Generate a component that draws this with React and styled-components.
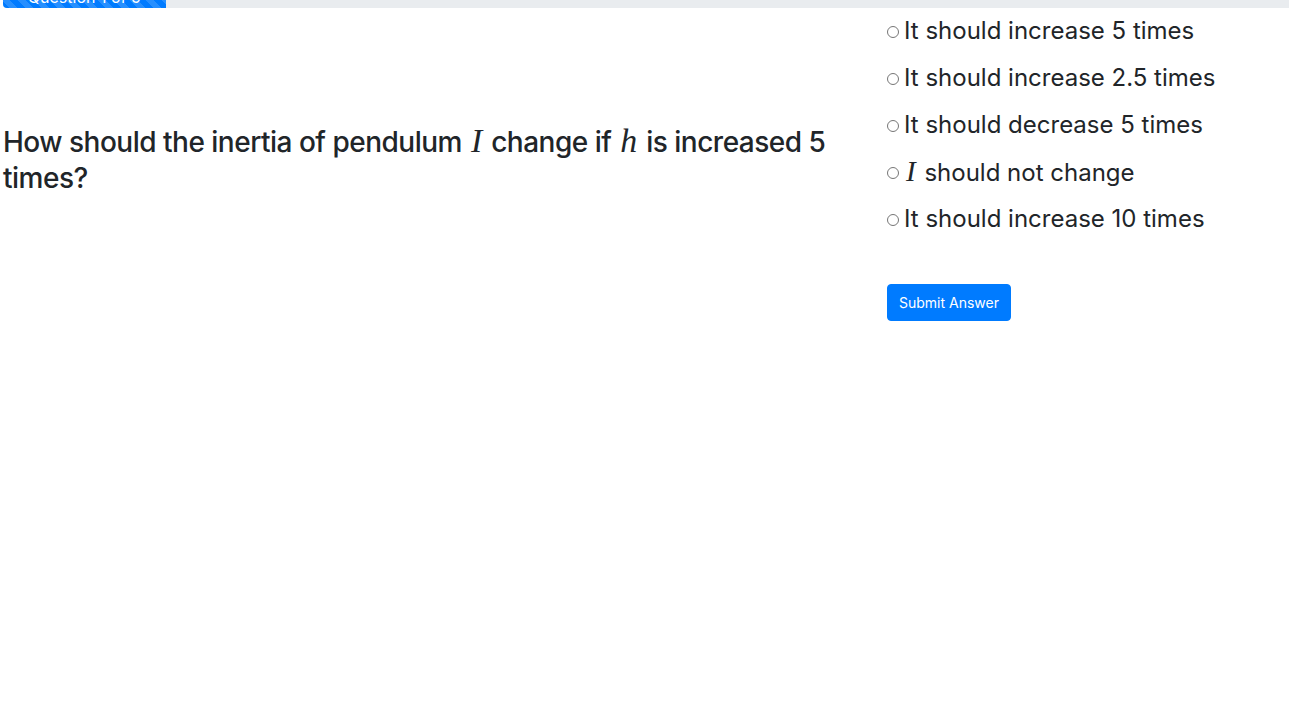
import React from 'react';
import styled, { createGlobalStyle } from 'styled-components';

const GlobalStyle = createGlobalStyle`
  html, body {
    margin: 0;
    padding: 0;
    background: #fff;
    color: #212529;
    font-family: Inter, "Noto Sans", "Liberation Sans", sans-serif;
    overflow: hidden;
  }
`;

const Page = styled.div`
  padding-left: 3px;
`;

const Progress = styled.div`
  display: flex;
  height: 22px;
  margin: -14px -4px 0 0;
  background: #e9ecef;
  border-radius: 4px;
  overflow: hidden;
`;

const ProgressFill = styled.div`
  width: ${(p) => p.$pct}%;
  background-color: #007bff;
  background-image: linear-gradient(
    45deg,
    rgba(255, 255, 255, 0.15) 25%,
    transparent 25%,
    transparent 50%,
    rgba(255, 255, 255, 0.15) 50%,
    rgba(255, 255, 255, 0.15) 75%,
    transparent 75%,
    transparent
  );
  background-size: 16px 16px;
  color: #fff;
  font-size: 16px;
  line-height: 22px;
  text-align: center;
  white-space: nowrap;
`;

const Row = styled.div`
  display: grid;
  grid-template-columns: 884px 1fr;
  align-items: center;
`;

const Question = styled.h3`
  margin: 0;
  max-width: 860px;
  font-size: 28px;
  font-weight: 500;
  line-height: 1.2;
  letter-spacing: -0.5px;
  padding-bottom: 12px;
`;

const Math = styled.span`
  font-family: "Liberation Serif", "DejaVu Serif", serif;
  font-style: italic;
  font-size: 1.21em;
  font-weight: 400;
  letter-spacing: 0;
  padding: 0 2px;
`;

const Answers = styled.form`
  padding-top: 6px;
  display: flex;
  flex-direction: column;
`;

const Option = styled.label`
  display: flex;
  align-items: center;
  height: 32px;
  margin-bottom: 15px;
  font-size: 24px;
  font-weight: 400;
  gap: 5px;
`;

const Radio = styled.input`
  appearance: none;
  margin: 4px 0 0 0;
  width: 12px;
  height: 12px;
  border: 1px solid #767676;
  border-radius: 50%;
  background: #fff;
  flex: none;
`;

const SubmitButton = styled.button`
  align-self: flex-start;
  margin-top: 35px;
  padding: 8px 11px;
  font-family: inherit;
  font-size: 14px;
  line-height: 19px;
  color: #fff;
  background: #007bff;
  border: 1px solid #007bff;
  border-radius: 4px;
`;

const options = [
  { key: 'a', text: 'It should increase 5 times' },
  { key: 'b', text: 'It should increase 2.5 times' },
  { key: 'c', text: 'It should decrease 5 times' },
  { key: 'd', math: 'I', text: ' should not change' },
  { key: 'e', text: 'It should increase 10 times' },
];

export default function App() {
  return (
    <Page>
      <GlobalStyle />
      <Progress>
        <ProgressFill $pct={12.6}>Question 1 of 5</ProgressFill>
      </Progress>
      <Row>
        <Question>
          How should the inertia of pendulum <Math>I</Math> change if <Math>h</Math> is increased 5 times?
        </Question>
        <Answers onSubmit={(e) => e.preventDefault()}>
          {options.map((o) => (
            <Option key={o.key}>
              <Radio type="radio" name="answer" value={o.key} />
              <span>
                {o.math && <Math>{o.math}</Math>}
                {o.text}
              </span>
            </Option>
          ))}
          <SubmitButton type="submit">Submit Answer</SubmitButton>
        </Answers>
      </Row>
    </Page>
  );
}
